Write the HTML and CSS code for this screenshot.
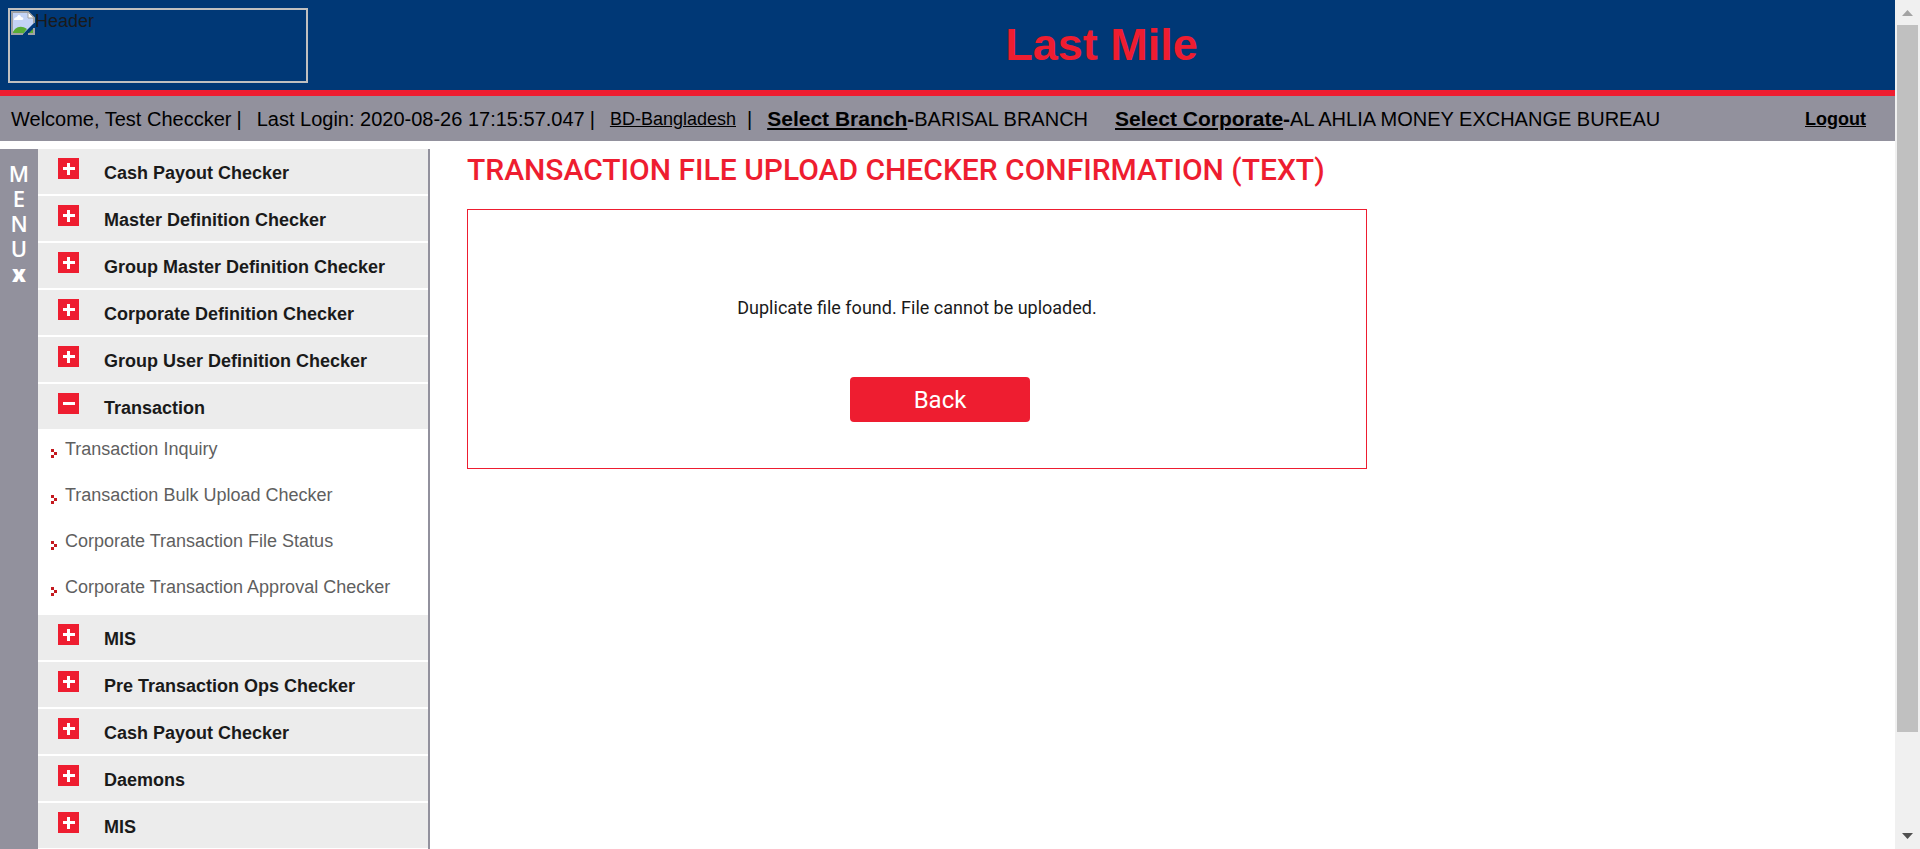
FILE: index.html
```html
<!DOCTYPE html>
<html lang="en">
<head>
<meta charset="utf-8">
<title>Last Mile</title>
<link rel="stylesheet" href="styles.css">
</head>
<body>
<div class="window">
  <div class="page">
    <header class="header">
      <div class="logo" role="img" aria-label="Header">
        <svg class="logo-icon" width="24" height="24" viewBox="0 0 24 24" aria-hidden="true">
          <path d="M1 1H17L23 7V12L12 23H1Z" fill="#c4d4f6"/>
          <path d="M3 9C3 6 6 6 6 6C7 3 10 4 10 6C13 6 13 9 11 9Z" fill="#fff"/>
          <path d="M1 23C3 17 9 13 16 18L12 23Z" fill="#58ad35"/>
          <path d="M23 17V23H17Z" fill="#58ad35"/>
          <path d="M12 23H1V1H17L23 7V12M23 17V23H17" fill="none" stroke="#a0a2a4" stroke-width="2"/>
          <path d="M17 1V7H23Z" fill="#fff" stroke="#a0a2a4"/>
        </svg>
        <span class="logo-alt">Header</span>
      </div>
      <h1 class="brand">Last Mile</h1>
    </header>

    <div class="status">
      <span class="welcome">Welcome, Test Checcker</span>
      <span class="bar">|</span>
      <span class="login">Last Login: 2020-08-26 17:15:57.047</span>
      <span class="bar">|</span>
      <a class="country" href="#">BD-Bangladesh</a>
      <span class="bar">|</span>
      <span class="branch"><a class="pick" href="#">Select Branch</a><b>-</b>BARISAL BRANCH</span>
      <span class="corporate"><a class="pick" href="#">Select Corporate</a><b>-</b>AL AHLIA MONEY EXCHANGE BUREAU</span>
      <a class="logout" href="#">Logout</a>
    </div>

    <div class="body">
      <button class="rail" type="button" aria-label="Close menu"><span>M</span><span>E</span><span>N</span><span>U</span><span class="rail-close">x</span></button>
      <nav class="menu">
        <button class="group" type="button"><span class="sign plus"></span>Cash Payout Checker</button>
        <button class="group" type="button"><span class="sign plus"></span>Master Definition Checker</button>
        <button class="group" type="button"><span class="sign plus"></span>Group Master Definition Checker</button>
        <button class="group" type="button"><span class="sign plus"></span>Corporate Definition Checker</button>
        <button class="group" type="button"><span class="sign plus"></span>Group User Definition Checker</button>
        <button class="group open" type="button" aria-expanded="true"><span class="sign"></span>Transaction</button>
        <ul class="links">
          <li><svg class="arrow" width="6" height="9" viewBox="0 0 6 9" aria-hidden="true"><path d="M0 0H3V3H0ZM3 3H6V6H3ZM0 6H3V9H0Z"/></svg><a href="#">Transaction Inquiry</a></li>
          <li><svg class="arrow" width="6" height="9" viewBox="0 0 6 9" aria-hidden="true"><path d="M0 0H3V3H0ZM3 3H6V6H3ZM0 6H3V9H0Z"/></svg><a href="#">Transaction Bulk Upload Checker</a></li>
          <li><svg class="arrow" width="6" height="9" viewBox="0 0 6 9" aria-hidden="true"><path d="M0 0H3V3H0ZM3 3H6V6H3ZM0 6H3V9H0Z"/></svg><a href="#">Corporate Transaction File Status</a></li>
          <li><svg class="arrow" width="6" height="9" viewBox="0 0 6 9" aria-hidden="true"><path d="M0 0H3V3H0ZM3 3H6V6H3ZM0 6H3V9H0Z"/></svg><a href="#">Corporate Transaction Approval Checker</a></li>
        </ul>
        <button class="group" type="button"><span class="sign plus"></span>MIS</button>
        <button class="group" type="button"><span class="sign plus"></span>Pre Transaction Ops Checker</button>
        <button class="group" type="button"><span class="sign plus"></span>Cash Payout Checker</button>
        <button class="group" type="button"><span class="sign plus"></span>Daemons</button>
        <button class="group" type="button"><span class="sign plus"></span>MIS</button>
      </nav>
      <main class="content">
        <h2 class="title">TRANSACTION FILE UPLOAD CHECKER CONFIRMATION (TEXT)</h2>
        <section class="panel">
          <p class="message">Duplicate file found. File cannot be uploaded.</p>
          <button class="back" type="button">Back</button>
        </section>
      </main>
    </div>
  </div>

  <div class="scrollbar" aria-hidden="true">
    <svg class="scroll-end" width="25" height="25" viewBox="0 0 25 25"><path d="M7 16L12.500 10L18 16Z" fill="#a3a3a3"/></svg>
    <div class="thumb"></div>
    <div class="track"></div>
    <svg class="scroll-end" width="25" height="25" viewBox="0 0 25 25"><path d="M7 9L12.500 15L18 9Z" fill="#505050"/></svg>
  </div>
</div>
</body>
</html>
```
FILE: styles.css
```css
* { box-sizing: border-box; }

body {
  margin: 0;
  background: #fff;
  color: #1a1a1a;
  font: 18px/24px "Liberation Sans", Arial, sans-serif;
}

button { font: inherit; color: inherit; border: 0; cursor: pointer; }

.window { display: flex; height: 100vh; overflow: hidden; }
.page { flex: 1; min-width: 0; display: flex; flex-direction: column; }

/* Header */
.header {
  display: flex;
  align-items: center;
  flex: none;
  padding: 8px 0 7px 8px;
  background: #003876;
  border-bottom: 6px solid #ee1d30;
}
.logo {
  display: flex;
  width: 300px;
  height: 75px;
  padding: 1px;
  border: 2px solid #c0c0c0;
}
.logo-icon { flex: none; }
.logo-alt { line-height: 20px; }
.brand {
  flex: 1;
  margin: 0;
  padding-bottom: 2px;
  text-align: center;
  font-size: 45px;
  line-height: 60px;
  color: #ee1d30;
}

/* Status bar */
.status {
  display: flex;
  align-items: center;
  flex: none;
  height: 45px;
  padding: 0 29px 0 11px;
  background: #92919d;
  color: #000;
  font-size: 20px;
  white-space: nowrap;
}
.status a { color: #000; }
.bar { margin: 0 15px 0 5px; }
.country { margin-right: 6px; font-size: 18px; }
.corporate { margin-left: 27px; }
.pick, .status b { font-size: 21px; font-weight: bold; }
.status .logout { margin-left: auto; font-size: 18px; font-weight: bold; }

/* Columns */
.body { flex: 1; min-height: 0; display: flex; margin-top: 8px; }

.rail {
  display: flex;
  flex-direction: column;
  align-items: center;
  flex: none;
  width: 38px;
  padding: 12px 0;
  background: #92919d;
  color: #fff;
  font: 600 22px/25px "Open Sans", sans-serif;
}
.rail-close { font-weight: 800; }

.menu {
  flex: none;
  width: 392px;
  border-right: 2px solid #92919d;
}
.group {
  display: flex;
  width: 100%;
  height: 45px;
  margin-bottom: 2px;
  padding: 12px 0 0 20px;
  background: #ececec;
  font-weight: bold;
  text-align: left;
}
.group.open { margin-bottom: 0; }

.sign {
  flex: none;
  width: 21px;
  height: 21px;
  margin: -3px 25px 0 0;
  background: linear-gradient(#fff, #fff) center / 12px 3px no-repeat #ee1d30;
}
.sign.plus {
  background:
    linear-gradient(#fff, #fff) center / 12px 3px no-repeat,
    linear-gradient(#fff, #fff) center / 3px 12px no-repeat,
    #ee1d30;
}

.links { margin: 0; padding: 8px 0 0 13px; height: 186px; list-style: none; }
.links li { display: flex; align-items: center; height: 24px; margin-bottom: 22px; }
.links a { color: #5f5f5f; text-decoration: none; }
.arrow { flex: none; margin: 9px 8px 0 0; fill: #c41a1f; }

/* Content */
.content { flex: 1; min-width: 0; padding: 0 37px; }
.title {
  margin: 0;
  font: 500 30px/42px Roboto, sans-serif;
  color: #ee1d30;
}
.panel {
  display: flex;
  flex-direction: column;
  align-items: center;
  max-width: 900px;
  margin-top: 18px;
  padding: 86px 0 46px;
  border: 1px solid #ee1d30;
  font-family: Roboto, sans-serif;
}
.message { margin: 0 0 57px; }
.back {
  width: 180px;
  height: 45px;
  margin-left: 46px;
  border-radius: 4px;
  background: #ee1d30;
  color: #fff;
  font-size: 24px;
}

/* Scrollbar */
.scrollbar {
  display: flex;
  flex-direction: column;
  flex: none;
  width: 25px;
  background: #f0f0f0;
}
.scroll-end { flex: none; }
.thumb { flex: 707; margin: 0 2px; background: #c0c0c0; }
.track { flex: 92; }
```
